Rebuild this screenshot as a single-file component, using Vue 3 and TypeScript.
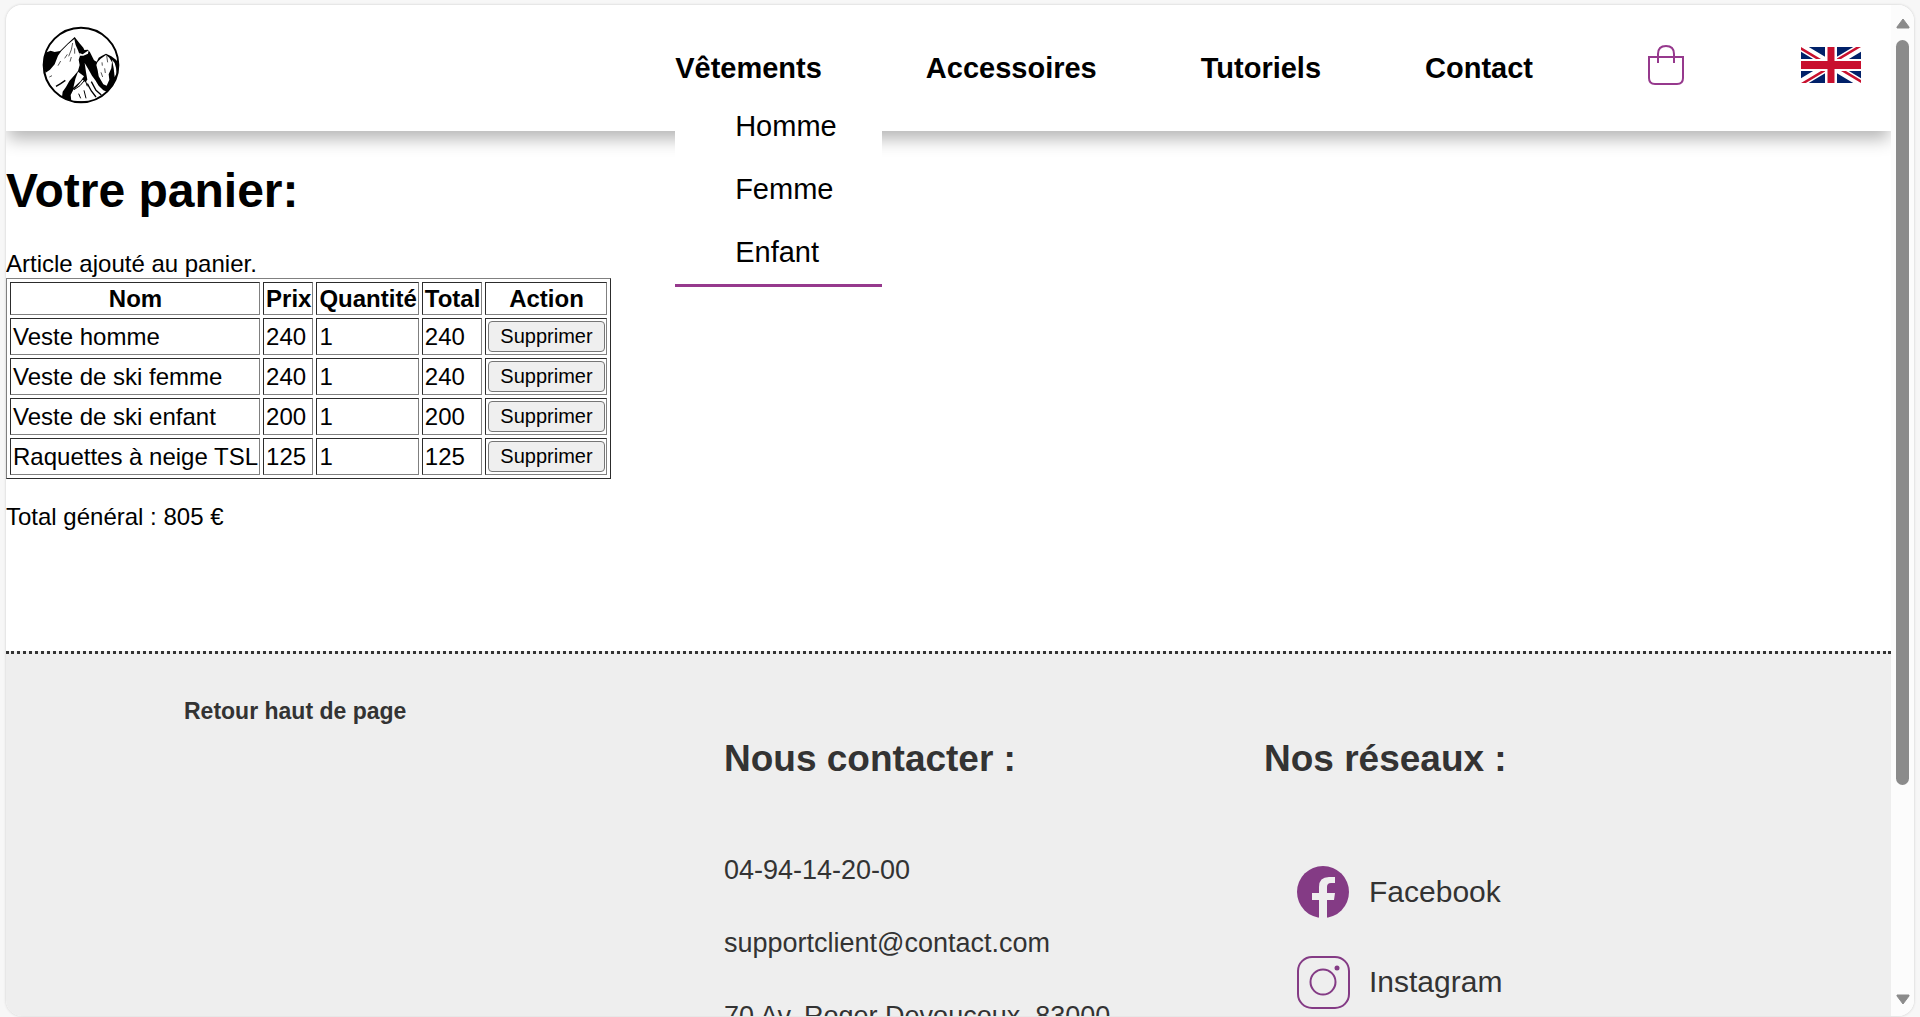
<script setup lang="ts">
interface Article {
  nom: string
  prix: number
  quantite: number
}

const articles: Article[] = [
  { nom: 'Veste homme', prix: 240, quantite: 1 },
  { nom: 'Veste de ski femme', prix: 240, quantite: 1 },
  { nom: 'Veste de ski enfant', prix: 200, quantite: 1 },
  { nom: 'Raquettes à neige TSL', prix: 125, quantite: 1 },
]

const total: number = articles.reduce((somme, a) => somme + a.prix * a.quantite, 0)

const sousMenu: string[] = ['Homme', 'Femme', 'Enfant']
const liens: string[] = ['Accessoires', 'Tutoriels', 'Contact']
</script>

<template>
  <div class="window">
    <div class="page">
      <header class="header" id="haut">
        <a href="#" class="logo" aria-label="Accueil">
          <svg viewBox="36 33 234 234" width="78" height="78">
            <defs>
              <clipPath id="disque"><circle cx="153" cy="150" r="113" /></clipPath>
            </defs>
            <circle cx="153" cy="150" r="113" fill="#fff" />
            <g clip-path="url(#disque)">
              <path
                d="M36 130 L50 112 62 107 74 111 90 108 112 86 134 66 148 84 160 98 163 105 174 104 180 112 186 124 192 136 200 140 206 128 216 122 228 116 244 124 258 134 270 150 270 200 240 245 200 262 150 262 100 262 60 230 Z"
                fill="#000"
              />
              <path
                d="M133 72 L114 88 94 108 84 122 74 148 60 164 40 178 46 200 64 224 82 240 96 246 98 230 108 216 118 198 132 182 144 168 149 150 146 134 150 122 144 106 137 90 Z"
                fill="#fff"
              />
              <path d="M148 114 L158 118 176 106 174 116 160 122 148 122 Z" fill="#fff" />
              <path
                d="M202 142 L212 131 228 120 238 128 246 142 244 160 236 178 238 194 230 212 220 208 212 194 206 184 203 166 199 150 Z"
                fill="#fff"
              />
              <path d="M246 134 L254 144 258 158 260 176 254 186 251 160 Z" fill="#fff" />
              <path
                d="M164 144 L176 164 186 182 196 196 206 212 220 226 234 232 212 252 190 260 124 258 122 240 130 224 142 214 150 204 158 194 166 202 172 194 168 172 Z"
                fill="#fff"
              />
              <path d="M144 170 L162 184 152 198 130 218 136 192 Z" fill="#fff" />
              <g fill="none" stroke="#000" stroke-width="2">
                <path d="M128 84 L124 104 116 124 M134 100 L134 116 M112 118 L104 130 M92 138 L84 152 M124 126 L120 140" />
                <path d="M58 186 L66 182" />
                <path d="M78 214 L92 206 106 196" stroke-width="4" />
                <path d="M230 122 L233 142 M216 142 L217 152 M224 160 L226 174 M213 172 L218 186" />
                <path d="M132 224 L150 212 162 198 M146 236 L152 250 M162 226 L168 250 M166 196 L172 214" stroke-width="3" />
                <path d="M172 206 L184 228 198 246 M184 200 L198 226 214 240" stroke-width="4" />
              </g>
            </g>
            <circle cx="153" cy="150" r="112" fill="none" stroke="#000" stroke-width="6" />
          </svg>
        </a>
        <nav>
          <ul class="nav">
            <li class="has-menu">
              <a href="#" class="nav-link">Vêtements</a>
              <ul class="menu">
                <li v-for="entree in sousMenu" :key="entree"><a href="#">{{ entree }}</a></li>
              </ul>
            </li>
            <li v-for="lien in liens" :key="lien"><a href="#" class="nav-link">{{ lien }}</a></li>
            <li>
              <a href="#" class="nav-icon" aria-label="Panier">
                <svg viewBox="0 0 60 42" width="60" height="42" fill="none" stroke="#96398d" stroke-width="2">
                  <path d="M12 13 H46 V34 Q46 40 40 40 H18 Q12 40 12 34 Z" />
                  <path d="M21 19 V10 Q21 2 29 2 T37 10 V19" />
                </svg>
              </a>
            </li>
            <li>
              <a href="#" class="nav-icon" aria-label="English">
                <svg viewBox="0 0 60 36" width="60" height="36">
                  <defs>
                    <clipPath id="quarts">
                      <path d="M30 18 H60 V36 Z M30 18 V36 H0 Z M30 18 H0 V0 Z M30 18 V0 H60 Z" />
                    </clipPath>
                  </defs>
                  <rect width="60" height="36" fill="#012169" />
                  <path d="M0 0 L60 36 M60 0 L0 36" stroke="#fff" stroke-width="8" />
                  <path d="M0 0 L60 36 M60 0 L0 36" stroke="#c8102e" stroke-width="5" clip-path="url(#quarts)" />
                  <path d="M30 0 V36 M0 18 H60" stroke="#fff" stroke-width="12" />
                  <path d="M30 0 V36" stroke="#c8102e" stroke-width="7" />
                  <path d="M0 18 H60" stroke="#c8102e" stroke-width="8" />
                </svg>
              </a>
            </li>
          </ul>
        </nav>
      </header>

      <main class="cart">
        <h1>Votre panier:</h1>
        <div class="notice">Article ajouté au panier.</div>
        <table>
          <thead>
            <tr>
              <th>Nom</th>
              <th>Prix</th>
              <th>Quantité</th>
              <th>Total</th>
              <th>Action</th>
            </tr>
          </thead>
          <tbody>
            <tr v-for="article in articles" :key="article.nom">
              <td>{{ article.nom }}</td>
              <td>{{ article.prix }}</td>
              <td>{{ article.quantite }}</td>
              <td>{{ article.prix * article.quantite }}</td>
              <td><button type="button">Supprimer</button></td>
            </tr>
          </tbody>
        </table>
        <p>Total général : {{ total }} €</p>
      </main>

      <footer class="footer">
        <div class="col">
          <a href="#haut" class="top-link">Retour haut de page</a>
        </div>
        <div class="col">
          <h2>Nous contacter :</h2>
          <p>04-94-14-20-00</p>
          <p>supportclient@contact.com</p>
          <p>70 Av. Roger Devoucoux, 83000</p>
        </div>
        <div class="col">
          <h2>Nos réseaux :</h2>
          <ul class="social">
            <li>
              <a href="#">
                <svg viewBox="0 0 54 54" width="54" height="54">
                  <circle cx="27" cy="27" r="26" fill="#843b85" />
                  <path
                    d="M23 54 V35 H16 V28 H23 V22 Q23 12 33 12 H39 V18 H35 Q31 18 31 22 V28 H39 L38 35 H31 V54 Z"
                    fill="#eee"
                  />
                </svg>
                <span>Facebook</span>
              </a>
            </li>
            <li>
              <a href="#">
                <svg viewBox="0 0 54 54" width="54" height="54" fill="none" stroke="#843b85" stroke-width="2">
                  <rect x="2" y="2" width="51" height="51" rx="14" />
                  <circle cx="27" cy="27" r="12.5" />
                  <circle cx="41" cy="13" r="2.5" fill="#843b85" stroke="none" />
                </svg>
                <span>Instagram</span>
              </a>
            </li>
          </ul>
        </div>
      </footer>
    </div>

    <div class="scrollbar" aria-hidden="true">
      <svg viewBox="0 0 14 11" width="14" height="11">
        <path d="M7 1 L13 9 V10 H1 V9 Z" fill="#8b8b8b" stroke="#8b8b8b" stroke-linejoin="round" />
      </svg>
      <div class="track"><div class="thumb"></div></div>
      <svg viewBox="0 0 14 11" width="14" height="11">
        <path d="M7 10 L13 2 V1 H1 V2 Z" fill="#8b8b8b" stroke="#8b8b8b" stroke-linejoin="round" />
      </svg>
    </div>
  </div>
</template>

<style>
body {
  background: #f7f7f7;
}

#app {
  box-sizing: border-box;
  height: 100vh;
  padding: 5px 6px 1px;
}
</style>

<style scoped>
.window {
  display: flex;
  height: 100%;
  overflow: hidden;
  border-radius: 16px;
  background: #fff;
  box-shadow: 0 0 2px 1px #e2e2e2;
  font-family: "Liberation Sans", Arial, sans-serif;
  font-size: 24px;
  line-height: 27px;
  color: #000;
}

.page {
  flex: 1;
  min-width: 0;
  overflow: hidden;
}

a {
  color: inherit;
  text-decoration: none;
}

ul {
  margin: 0;
  padding: 0;
  list-style: none;
}

svg {
  display: block;
}

.header {
  position: relative;
  display: flex;
  align-items: center;
  justify-content: space-between;
  padding: 21px 30px 27px 36px;
  background: #fff;
  box-shadow: 0 10px 16px -2px rgba(0, 0, 0, 0.29);
}

.nav {
  display: flex;
  align-items: center;
  gap: 104px;
  font-size: 29px;
  line-height: 33px;
}

.nav-link {
  display: block;
  padding-top: 6px;
  font-weight: bold;
}

.has-menu {
  position: relative;
}

.menu {
  position: absolute;
  top: 49px;
  left: 0;
  padding: 0 45px 0 60px;
  background: #fff;
  border-bottom: 3px solid #96398d;
}

.menu a {
  display: block;
  padding: 15px 0;
}

.cart {
  padding-bottom: 97px;
}

h1 {
  margin: 32px 0;
  font-size: 48px;
  line-height: 55px;
}

.notice {
  padding-bottom: 1px;
}

table {
  border: 1px solid;
  border-color: #808080 #2c2c2c #2c2c2c #808080;
  border-spacing: 3px;
}

th,
td {
  padding: 2px 1px 2px 2px;
  border: 1px solid;
  border-color: #2c2c2c #808080 #808080 #2c2c2c;
}

td button {
  display: block;
  padding: 3px 11px;
  border: 1px solid #767676;
  border-radius: 4px;
  background: #efefef;
  color: #000;
  font-family: inherit;
  font-size: 20px;
  line-height: 23px;
}

.cart p {
  margin: 24px 0;
}

.footer {
  display: grid;
  grid-template-columns: repeat(3, 1fr);
  padding: 43px 87px 44px 178px;
  border-top: 3px dotted #333;
  background: #eee;
  color: #333;
}

.top-link {
  font-size: 23px;
  font-weight: bold;
}

h2 {
  margin: 40px 0 75px;
  font-size: 37px;
  line-height: 43px;
}

.col p {
  margin: 0 0 42px;
  font-size: 27px;
  line-height: 31px;
}

.social {
  padding: 10px 0 0 32px;
}

.social li {
  margin-bottom: 36px;
}

.social a {
  display: flex;
  align-items: center;
  gap: 19px;
  font-size: 30px;
  line-height: 34px;
}

.scrollbar {
  display: flex;
  flex-direction: column;
  align-items: center;
  gap: 11px;
  width: 23px;
  padding: 13px 0 11px;
  box-sizing: border-box;
  background: #fcfcfc;
}

.track {
  flex: 1;
  width: 13px;
}

.thumb {
  height: 79%;
  border-radius: 7px;
  background: #8b8b8b;
}
</style>
